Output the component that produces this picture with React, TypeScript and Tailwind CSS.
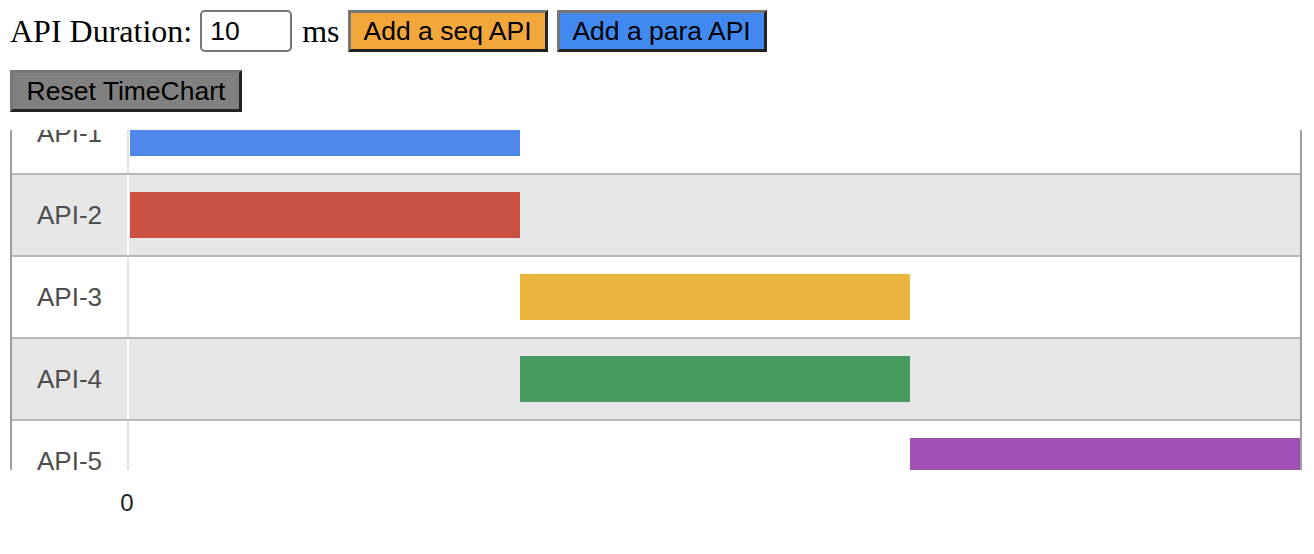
import { useState } from 'react'

interface Api {
  name: string
  start: number
  dur: number
  color: string
}

const UNIT = 390

const apis: Api[] = [
  { name: 'API-1', start: 0, dur: 1, color: 'bg-[#5087eb]' },
  { name: 'API-2', start: 0, dur: 1, color: 'bg-[#ca5242]' },
  { name: 'API-3', start: 1, dur: 1, color: 'bg-[#ebb53e]' },
  { name: 'API-4', start: 1, dur: 1, color: 'bg-[#479a60]' },
  { name: 'API-5', start: 2, dur: 1, color: 'bg-[#9f50b5]' },
]

const btn = 'h-[42px] px-0 whitespace-nowrap text-center border-[3px] border-t-[#767676] border-l-[#767676] border-b-[#222] border-r-[#222] text-black text-[26.5px] leading-none font-["Liberation_Sans",Arial,sans-serif]'

export default function App() {
  const [duration, setDuration] = useState('10')

  return (
    <div className="p-[10px] bg-white min-h-[554px] font-['Liberation_Serif','Times_New_Roman',serif] text-black">
      {/* Controls */}
      <div className="flex items-center h-[42px] text-[32px] whitespace-nowrap">
        <span>API Duration:</span>
        <input
          value={duration}
          onChange={e => setDuration(e.target.value)}
          className="ml-[8px] w-[92px] h-[42px] border-2 border-[#767676] rounded-[5px] px-[8px] text-[26.5px] font-['Liberation_Sans',Arial,sans-serif] outline-none"
        />
        <span className="ml-[10px]">ms</span>
        <button className={`${btn} ml-[8px] w-[200px] bg-[#f2a73b]`}>Add a seq API</button>
        <button className={`${btn} ml-[9px] w-[210px] bg-[#4189f1]`}>Add a para API</button>
      </div>
      <div className="mt-[18px] h-[42px]">
        <button className={`${btn} w-[232px] bg-[#808080]`}>Reset TimeChart</button>
      </div>

      {/* Timeline */}
      <div className="mt-[18px] w-[1292px] h-[340px] overflow-hidden border-l-2 border-r-2 border-[#9e9e9e]">
        <div className="-mt-[37px]">
          {apis.map((a, i) => {
            const gray = i % 2 === 1
            return (
              <div
                key={a.name}
                className={`flex h-[82px] border-b-2 border-[#b7b7b7] ${gray ? 'bg-[#e6e6e6]' : 'bg-white'}`}
              >
                <div className="w-[115px] flex items-center justify-center text-[26px] text-[#4d4d4d] font-['Liberation_Sans',Arial,sans-serif]">
                  {a.name}
                </div>
                <div className={`w-[2px] ${gray ? 'bg-white' : 'bg-[#e3e3e3]'}`} />
                <div className="flex-1 flex items-center">
                  <div
                    className={`h-[46px] ${a.color}`}
                    style={{ marginLeft: a.start * UNIT + 1, width: a.dur * UNIT }}
                  />
                </div>
              </div>
            )
          })}
        </div>
      </div>

      {/* Axis */}
      <div className="flex mt-[21px] text-[24px] leading-none text-[#222] font-['Liberation_Sans',Arial,sans-serif]">
        <div className="w-[117px]" />
        <span className="-translate-x-1/2">0</span>
      </div>
    </div>
  )
}
